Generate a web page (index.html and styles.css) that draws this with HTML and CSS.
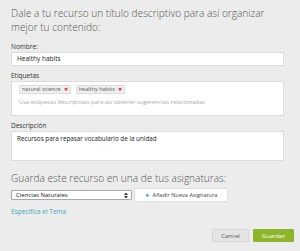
FILE: index.html
```html
<!DOCTYPE html>
<html lang="es">
<head>
<meta charset="utf-8">
<link rel="stylesheet" href="styles.css">
</head>
<body>
<div class="page">
  <h1 class="title">Dale a tu recurso un título descriptivo para así organizar mejor tu contenido:</h1>

  <div class="field field-name">
    <label class="label">Nombre:</label>
    <div class="input">Healthy habits</div>
  </div>

  <div class="field field-tags">
    <label class="label">Etiquetas</label>
    <div class="tagbox">
      <div class="tags">
        <span class="tag">natural science <span class="x">✖</span></span>
        <span class="tag">healthy habits <span class="x">✖</span></span>
      </div>
      <div class="placeholder">Usa etiquetas descriptivas para así obtener sugerencias relacionadas</div>
    </div>
  </div>

  <div class="field field-desc">
    <label class="label">Descripción</label>
    <div class="textarea">Recursos para repasar vocabulario de la unidad</div>
  </div>

  <h2 class="subtitle">Guarda este recurso en una de tus asignaturas:</h2>

  <div class="subject-row">
    <div class="select">
      <span>Ciencias Naturales</span>
      <svg class="arrows" width="4" height="7" viewBox="0 0 4 7"><path d="M0 3 L2 0.5 L4 3 Z M0 4 L2 6.5 L4 4 Z" fill="#333"/></svg>
    </div>
    <button class="add-btn"><span class="plus">✚</span>Añadir Nueva Asignatura</button>
  </div>

  <a class="link">Especifica el Tema</a>

  <div class="actions">
    <button class="btn cancel">Cancel</button>
    <button class="btn save">Guardar</button>
  </div>
</div>
</body>
</html>
```

FILE: styles.css
```css
html, body {
  margin: 0;
  padding: 0;
  background: #ececec;
}
body {
  font-family: "Open Sans", "Liberation Sans", sans-serif;
  color: #333;
  width: 300px;
  height: 251px;
  overflow: hidden;
}
.page {
  padding: 7px 16px 0 11px;
  display: flex;
  flex-direction: column;
}
.title {
  margin: 0;
  font-weight: 300;
  font-size: 10.1px;
  line-height: 13.5px;
  color: #555;
}
.field {
  display: flex;
  flex-direction: column;
}
.field-name { margin-top: 8px; }
.field-tags { margin-top: 5px; }
.field-desc { margin-top: 5px; }
.label {
  font-size: 6.5px;
  line-height: 9px;
  color: #333;
  margin-bottom: 1px;
}
.input {
  background: #fff;
  border: 1px solid #dcdcdc;
  height: 12px;
  font-size: 6.5px;
  line-height: 12px;
  padding-left: 5px;
  color: #222;
}
.tagbox {
  background: #fff;
  border: 1px solid #dcdcdc;
  height: 35px;
  padding: 3px 7px 0;
  box-sizing: border-box;
}
.tags {
  display: flex;
  gap: 5px;
}
.tag {
  font-size: 5.5px;
  line-height: 7px;
  background: #f0f0f0;
  border: 1px solid #ddd;
  border-radius: 1px;
  padding: 0 2px;
  color: #555;
  display: flex;
  align-items: center;
  gap: 3px;
}
.x {
  color: #e03b3b;
  font-size: 5px;
}
.placeholder {
  margin-top: 4px;
  font-size: 5.8px;
  line-height: 8px;
  color: #aaa;
}
.textarea {
  background: #fff;
  border: 1px solid #dcdcdc;
  height: 30px;
  box-sizing: border-box;
  padding: 3px 5px;
  font-size: 6.3px;
  line-height: 8px;
  color: #222;
}
.subtitle {
  margin: 10px 0 0;
  font-weight: 300;
  font-size: 10.1px;
  line-height: 14px;
  color: #555;
}
.subject-row {
  margin-top: 3px;
  display: flex;
  align-items: center;
  gap: 2px;
}
.select {
  width: 121px;
  height: 10px;
  box-sizing: border-box;
  background: #fff;
  border: 1px solid #aaa;
  border-radius: 1px;
  display: flex;
  align-items: center;
  justify-content: space-between;
  padding: 0 3px 0 4px;
  font-size: 6px;
  color: #111;
}
.add-btn {
  width: 94px;
  height: 14px;
  background: #fff;
  border: 1px solid #e0e0e0;
  border-radius: 1px;
  font-family: inherit;
  font-size: 5.6px;
  color: #444;
  padding: 0;
  display: flex;
  align-items: center;
  justify-content: center;
  gap: 4px;
}
.plus {
  color: #3aaecb;
  font-size: 5px;
}
.link {
  margin-top: 5px;
  font-size: 6.5px;
  line-height: 9px;
  color: #3aa7c4;
}
.actions {
  margin-top: 13px;
  margin-right: -10px;
  display: flex;
  justify-content: flex-end;
  gap: 4px;
}
.btn {
  height: 13px;
  font-family: inherit;
  font-size: 6px;
  padding: 0;
  border-radius: 1px;
}
.cancel {
  width: 37px;
  background: #e4e4e4;
  border: 1px solid #d6d6d6;
  color: #555;
}
.save {
  width: 41px;
  background: #8db52a;
  border: 1px solid #8db52a;
  color: #fff;
}
```
